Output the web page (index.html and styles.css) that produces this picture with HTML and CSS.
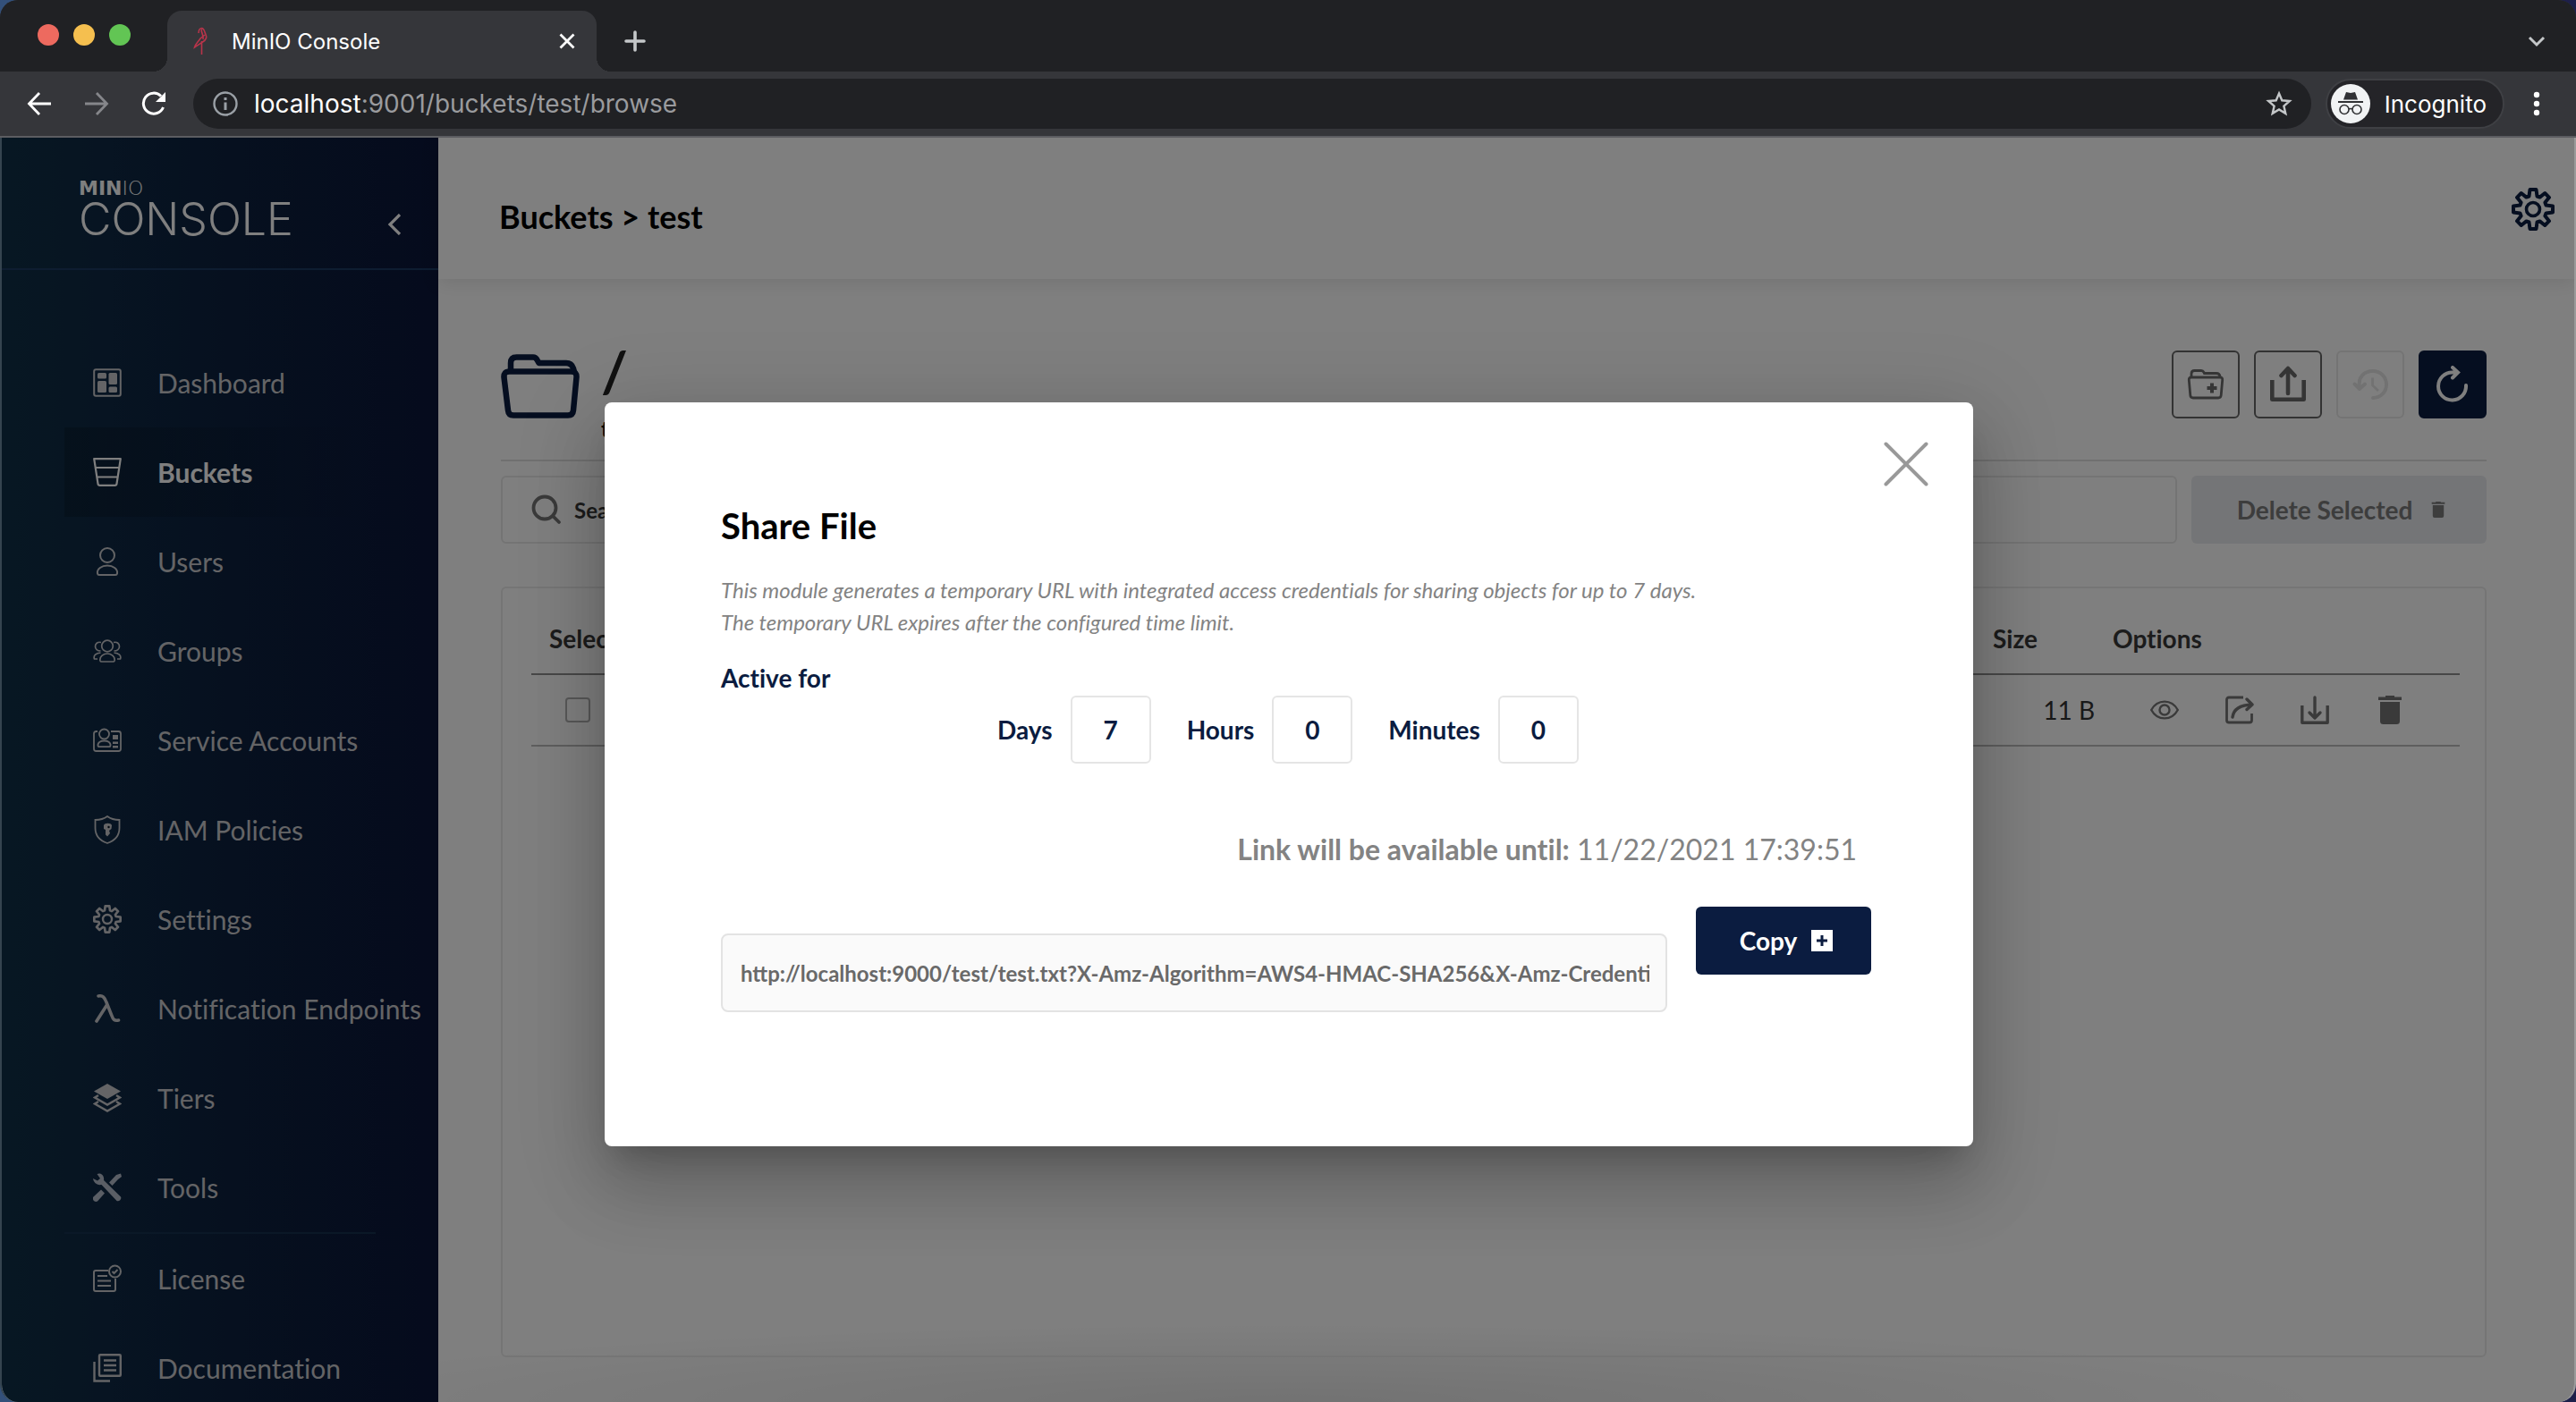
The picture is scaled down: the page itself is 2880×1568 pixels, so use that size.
FILE: index.html
```html
<!DOCTYPE html>
<html lang="en">
<head>
<meta charset="utf-8">
<title>MinIO Console</title>
<link rel="stylesheet" href="styles.css">
</head>
<body>
<svg class="sprite" aria-hidden="true">
  <symbol id="gear" viewBox="0 0 48 48">
    <path fill="none" stroke="currentColor" stroke-width="4" stroke-linejoin="round" d="M19.500 9.500 L20.500 2 H27.500 L28.500 9.500 L31.500 10.600 L37.200 6 L42 10.800 L37.400 16.500 L38.500 19.500 L46 20.500 V27.500 L38.500 28.500 L37.400 31.500 L42 37.200 L37.200 42 L31.500 37.400 L28.500 38.500 L27.500 46 H20.500 L19.500 38.500 L16.500 37.400 L10.800 42 L6 37.200 L10.600 31.500 L9.500 28.500 L2 27.500 V20.500 L9.500 19.500 L10.600 16.500 L6 10.800 L10.800 6 L16.500 10.600 Z"/>
    <circle cx="24" cy="24" r="7.500" fill="none" stroke="currentColor" stroke-width="3.600"/>
  </symbol>
  <symbol id="trash" viewBox="0 0 32 32">
    <path fill="currentColor" d="M11 0h10v1.500h8V5H3V1.500h8zM5 7h22v21.500a3.500 3.500 0 0 1-3.500 3.500h-15A3.500 3.500 0 0 1 5 28.500z"/>
  </symbol>
</svg>

<header class="browser">
  <div class="tabstrip">
    <div class="lights"><span class="light red"></span><span class="light amber"></span><span class="light green"></span></div>
    <div class="tab">
      <svg class="favicon" viewBox="0 0 32 32" fill="none" stroke="#b8344a" stroke-width="1.600"><path d="M13 7c0-4 2-5.500 3.500-5.500 3 0 3 4 4.500 7 2 4-1 7-3.500 8.500-4 2.500-6 4-9 6 1-4 4-6 6.500-10L20 9M16.500 2.500C15 6 19 8 18 14M16.500 16v15"/></svg>
      <span class="tab-title">MinIO Console</span>
      <button class="plain" aria-label="Close tab"><svg width="18" height="18" viewBox="0 0 18 18" stroke="#fff" stroke-width="2.800"><path d="M1.500 1.500l15 15M16.500 1.500l-15 15"/></svg></button>
    </div>
    <button class="plain new-tab" aria-label="New tab"><svg width="24" height="24" viewBox="0 0 24 24" stroke="#c4c7c9" stroke-width="3.600" stroke-linecap="round"><path d="M12 2v20M2 12h20"/></svg></button>
    <button class="plain tab-search" aria-label="Search tabs"><svg width="20" height="20" viewBox="0 0 20 20" fill="none" stroke="#c4c7c9" stroke-width="3"><path d="M2 6l8 8 8-8"/></svg></button>
  </div>
  <div class="toolbar">
    <button class="plain" aria-label="Back"><svg width="28" height="28" viewBox="0 0 28 28" fill="none" stroke="#fff" stroke-width="2.800"><path d="M27 14H3M14 2L2.500 14 14 26"/></svg></button>
    <button class="plain" aria-label="Forward"><svg width="28" height="28" viewBox="0 0 28 28" fill="none" stroke="#85868a" stroke-width="2.800"><path d="M1 14h24M14 2l11.500 12L14 26"/></svg></button>
    <button class="plain" aria-label="Reload"><svg width="28" height="28" viewBox="0 0 28 28"><path fill="none" stroke="#fff" stroke-width="3" d="M24.500 18A11.500 11.500 0 1 1 22 5.500"/><path fill="#fff" d="M27 1v11H16z"/></svg></button>
    <div class="address">
      <svg width="28" height="28" viewBox="0 0 28 28" fill="none" stroke="#9aa0a6" stroke-width="2.400"><circle cx="14" cy="14" r="12.500"/><path stroke-width="3" d="M14 12.500V21M14 7v3"/></svg>
      <span class="url"><b>localhost</b>:9001/buckets/test/browse</span>
      <button class="plain" aria-label="Bookmark"><svg width="30" height="30" viewBox="0 0 30 30" fill="none" stroke="#c4c7c9" stroke-width="2.400"><path d="M15 3.500l3.300 7.800 8.500.7-6.400 5.600 1.900 8.300L15 21.500l-7.300 4.400 1.900-8.300L3.200 12l8.500-.7z"/></svg></button>
    </div>
    <button class="incognito">
      <svg width="44" height="44" viewBox="0 0 44 44"><circle cx="22" cy="22" r="22" fill="#f1f3f4"/><path fill="#303134" d="M14 17.500l3-8.500 5 1 5-1 3 8.500zM8 19h28v2H8z"/><g fill="none" stroke="#303134" stroke-width="1.600"><circle cx="15" cy="28.500" r="5"/><circle cx="29" cy="28.500" r="5"/><path d="M20 28q2-1 4 0"/></g></svg>
      <span>Incognito</span>
    </button>
    <button class="plain menu-dots" aria-label="Menu"><svg width="8" height="28" viewBox="0 0 8 28" fill="#fff"><circle cx="4" cy="4" r="3.200"/><circle cx="4" cy="14" r="3.200"/><circle cx="4" cy="24" r="3.200"/></svg></button>
  </div>
</header>

<div class="app">
  <aside class="sidebar">
    <div class="brand">
      <div class="logo">
        <span class="logo-top"><b>MIN</b>IO</span>
        <span class="logo-main">CONSOLE</span>
      </div>
      <button class="plain" aria-label="Collapse menu"><svg width="16" height="24" viewBox="0 0 16 24" fill="none" stroke="#fff" stroke-width="3.200"><path d="M14 1L3 12l11 11"/></svg></button>
    </div>
    <nav class="menu">
      <a href="#"><svg viewBox="0 0 32 32"><rect x="1.200" y="1.200" width="29.600" height="29.600" rx="2" fill="none" stroke="currentColor" stroke-width="2"/><g fill="currentColor"><rect x="5" y="5" width="10" height="6.500" rx="1.500"/><rect x="17.500" y="5" width="9.500" height="13" rx="1.500"/><rect x="5" y="14" width="10" height="13" rx="1.500"/><rect x="17.500" y="20.500" width="9.500" height="6.500" rx="1.500"/></g></svg>Dashboard</a>
      <a href="#" class="active"><svg viewBox="0 0 32 32" fill="none" stroke="currentColor" stroke-width="2.200" stroke-linejoin="round"><path d="M1.200 1.200h29.600L26.500 29q-.3 1.800-2 1.800h-17q-1.700 0-2-1.800zM2.500 11h27M4.500 21.500h23"/></svg>Buckets</a>
      <a href="#"><svg viewBox="0 0 32 32" fill="none" stroke="currentColor" stroke-width="2"><circle cx="16" cy="9" r="8"/><path d="M5 29.500C4 24 10 20.500 16 20.500S28 24 27 29.500q-.3 1.500-2 1.500H7q-1.700 0-2-1.500z"/></svg>Users</a>
      <a href="#"><svg viewBox="0 0 32 32" fill="none" stroke="currentColor" stroke-width="1.700"><circle cx="16" cy="10.500" r="6.300"/><path d="M8 27c-1-5 4-8 8-8s9 3 8 8q-.3 1-1.500 1h-13Q8.300 28 8 27zM9 6.500C5 5.500 2.500 8 2.500 11s2.500 5 6 5M23 6.500c4-1 6.500 1.500 6.500 4.500s-2.500 5-6 5M5 25H1.500c-1.500-4 2-6.500 7-7M27 25h3.500c1.500-4-2-6.500-7-7"/></svg>Groups</a>
      <a href="#"><svg viewBox="0 0 32 32" fill="none" stroke="currentColor" stroke-width="1.800"><path d="M5 6H3.500Q1 6 1 8.500v17Q1 28 3.500 28h25q2.500 0 2.500-2.500v-17Q31 6 28.500 6H20"/><circle cx="12.500" cy="9" r="5.500"/><path d="M5.500 22c-.5-4 3.500-5.500 7-5.500s7.500 1.500 7 5.500q-.2 1.200-1.500 1.200H7Q5.700 23.200 5.500 22z"/><path fill="currentColor" stroke="none" d="M22 10h6v5h-6zM22 17.500h6V20h-6zM22 22h6v2.500h-6z"/></svg>Service Accounts</a>
      <a href="#"><svg viewBox="0 0 32 32" fill="none" stroke="currentColor" stroke-width="1.800"><path d="M16 1c4 3 9 4 13.500 4v9c0 9-6 14.500-13.500 17C8.500 28.500 2.500 23 2.500 14V5C7 5 12 4 16 1z"/><path fill="currentColor" stroke="none" d="M12 11c1-3 8-3 9 0l-.5 4-2.500 2 1 3-3 3.500-2-2V16l-2-1z"/><circle cx="17.500" cy="13" r="1.200" fill="#071220" stroke="none"/></svg>IAM Policies</a>
      <a href="#"><svg><use href="#gear"/></svg>Settings</a>
      <a href="#"><svg viewBox="0 0 32 32" fill="none" stroke="currentColor" stroke-width="3.600" stroke-linecap="round"><path d="M6 2c5-1 7 1.500 9 7l6 15c1.500 4.500 3 6 7.500 5M15.500 12L4 30"/></svg>Notification Endpoints</a>
      <a href="#"><svg viewBox="0 0 32 32"><path fill="currentColor" d="M16 0l15 8.500L16 17 1 8.500z"/><path fill="none" stroke="currentColor" stroke-width="2.400" d="M6 13l-4 2.500L16 23.500l14-8L26 13M6 20l-4 2.500L16 30.500l14-8L26 20"/></svg>Tiers</a>
      <a href="#"><svg class="tools" viewBox="0 0 32 32" fill="currentColor"><path d="M4.500 1C9-1 13 3 12 8l19 18.500c1.500 2.500-2 6-4.500 4.500L9.500 13C4 14 .5 10 0 6l5 2.500L8 6zM18 10.500L26 2l5-1.500L32 4l-4 3-6.500 7zM9 18.500l4 4-8 9c-3 1.500-6-1.500-5-4.500z"/></svg>Tools</a>
      <hr>
      <a href="#"><svg viewBox="0 0 32 32" fill="none" stroke="currentColor" stroke-width="2"><path d="M17 7H3Q1 7 1 9v19q0 2 2 2h20q2 0 2-2V16M5 13h11M5 18.500h15M5 24h15"/><circle cx="24.500" cy="8" r="6.500"/><path d="M21.500 8l2 2 4-4"/></svg>License</a>
      <a href="#"><svg viewBox="0 0 32 32" fill="none" stroke="currentColor" stroke-width="2.400"><rect x="7" y="1.200" width="23.800" height="23.500" rx="1"/><path d="M12 7.500h14M12 13h14M12 18.500h14M1.500 9v21.500H19"/></svg>Documentation</a>
    </nav>
  </aside>

  <main class="main">
    <header class="page-head">
      <h1>Buckets &gt; test</h1>
      <button class="plain" aria-label="Bucket settings"><svg width="48" height="48"><use href="#gear"/></svg></button>
    </header>
    <div class="content">
      <section class="path">
        <svg class="folder" viewBox="0 0 88 72" fill="none" stroke="currentColor" stroke-width="6.500" stroke-linejoin="round"><path d="M11 19V10q0-6.500 6.500-6.500H36q3 0 4.500 3l2 3.500H73q6 0 8 6l1 4"/><path d="M9.500 19.500h69q6.500 0 6 6.500l-3.500 37q-.5 5.500-6 5.500H14q-5.500 0-6-5.500L3.500 26q-.5-6.500 6-6.500z"/></svg>
        <div class="path-text"><h2>/</h2><p>test</p></div>
        <div class="actions">
          <button aria-label="New folder"><svg width="42" height="42" viewBox="0 0 42 42" fill="none" stroke="currentColor" stroke-width="2.800"><path d="M5 12V9q0-3.500 3.500-3.500H16q2 0 3 2l.5 1H33q3.500 0 4 3.500"/><path d="M5 13h32q3 0 2.700 3l-1.500 17q-.2 3-3.200 3H7q-3 0-3.200-3L2.300 16Q2 13 5 13z"/><path stroke-width="4" d="M28 19.500v11M22.500 25h11"/></svg></button>
          <button aria-label="Upload"><svg width="42" height="42" viewBox="0 0 42 42" fill="none" stroke="currentColor" stroke-width="4.600" stroke-linejoin="round"><path stroke-linecap="round" d="M21 31V4M13.500 11L21 3l7.500 8"/><path d="M3.300 16v21.700h35.400V16"/></svg></button>
          <button disabled aria-label="Version history"><svg width="42" height="42" viewBox="0 0 42 42" fill="none" stroke="currentColor" stroke-width="4"><path d="M9 24C7 13 14 6 24 6c8.500 0 15 6.500 15 15s-6.500 15-15 15" stroke-linecap="round"/><path stroke-linecap="round" stroke-linejoin="round" d="M3.500 20.500L9 26l6-5.500"/><path stroke-width="2.800" d="M23.500 13.500V22l6.500 6"/></svg></button>
          <button class="primary" aria-label="Refresh"><svg width="42" height="42" viewBox="0 0 42 42" fill="none" stroke="currentColor" stroke-width="4" stroke-linecap="round"><path d="M36 22A15.500 15.500 0 1 1 21 7.500h5M21 2l6 5.500-6 6"/></svg></button>
        </div>
      </section>
      <section class="filters">
        <label class="search"><svg width="34" height="34" viewBox="0 0 34 34" fill="none" stroke="currentColor" stroke-width="3.800"><circle cx="15" cy="15" r="12.500"/><path stroke-linecap="round" d="M24 24l7 7"/></svg><input type="text" placeholder="Search Objects" aria-label="Search Objects"></label>
        <button class="delete">Delete Selected <svg width="18" height="18"><use href="#trash"/></svg></button>
      </section>
      <section class="panel">
        <table>
          <thead><tr><th class="c-select">Select</th><th aria-label="Name"></th><th class="c-date" aria-label="Last modified"></th><th class="c-size">Size</th><th class="c-options">Options</th></tr></thead>
          <tbody><tr>
            <td class="c-select"><input type="checkbox" aria-label="Select test.txt"></td><td></td><td class="c-date"></td><td class="c-size">11 B</td>
            <td class="c-options"><div class="row-icons">
              <button class="plain" aria-label="Preview"><svg viewBox="0 0 32 32" fill="none" stroke="currentColor" stroke-width="2.400"><path d="M1.200 16C8 3.500 24 3.500 30.800 16 24 28.500 8 28.500 1.200 16z"/><circle cx="16" cy="16" r="5.500"/></svg></button>
              <button class="plain" aria-label="Share"><svg viewBox="0 0 32 32" fill="none" stroke="currentColor" stroke-width="2.800" stroke-linejoin="round"><path d="M20 2H4Q1.500 2 1.500 4.500v23Q1.500 30 4 30h23q2.500 0 2.500-2.500V20"/><path stroke-width="3.400" stroke-linecap="round" d="M8 24c1-8 7-13.500 22-14M24 4l6 6-6 5.500"/></svg></button>
              <button class="plain" aria-label="Download"><svg viewBox="0 0 32 32" fill="none" stroke="currentColor" stroke-width="3.400" stroke-linejoin="round"><path stroke-linecap="round" d="M16 2v22M10 19l6 6 6-6"/><path d="M1.800 11v19.200h28.400V11"/></svg></button>
              <button class="plain" aria-label="Delete"><svg><use href="#trash"/></svg></button>
            </div></td>
          </tr></tbody>
        </table>
      </section>
    </div>
  </main>

  <div class="overlay">
    <div class="dialog" role="dialog" aria-modal="true" aria-labelledby="dlg-title">
      <div class="dialog-close"><button class="plain" aria-label="Close"><svg width="50" height="50" viewBox="0 0 50 50" stroke="#999" stroke-width="4" stroke-linecap="round"><path d="M2.500 2.500l45 45M47.500 2.500l-45 45"/></svg></button></div>
      <h2 id="dlg-title">Share File</h2>
      <p class="desc">This module generates a temporary URL with integrated access credentials for sharing objects for up to 7 days.<br>The temporary URL expires after the configured time limit.</p>
      <h3>Active for</h3>
      <div class="duration">
        <label>Days <input type="text" value="7"></label>
        <label>Hours <input type="text" value="0"></label>
        <label>Minutes <input type="text" value="0"></label>
      </div>
      <p class="until"><b>Link will be available until:</b> 11/22/2021 17:39:51</p>
      <div class="share">
        <input type="text" readonly aria-label="Share link" value="http://localhost:9000/test/test.txt?X-Amz-Algorithm=AWS4-HMAC-SHA256&amp;X-Amz-Credential=minio">
        <button class="copy">Copy <svg width="24" height="24" viewBox="0 0 24 24"><path fill="#fff" d="M0 0h24v24H0z"/><path stroke="#0b1c40" stroke-width="3" d="M12 6v12M6 12h12"/></svg></button>
      </div>
    </div>
  </div>
</div>
</body>
</html>
```
FILE: styles.css
```css
* { box-sizing: border-box; }
html { background: linear-gradient(90deg, #33507a, #1d1f4a); }
body {
  margin: 0;
  height: 100vh;
  display: flex;
  flex-direction: column;
  font-family: Lato, "Liberation Sans", sans-serif;
  font-variant-ligatures: none;
}
h1, h2, h3, p { margin: 0; }
button, input { font: inherit; color: inherit; }
button { cursor: pointer; }
svg { display: block; flex: none; }
.sprite { position: absolute; width: 0; height: 0; }
.plain { padding: 0; border: 0; background: none; flex: none; }

/* Browser chrome */
.browser {
  flex: none;
  overflow: hidden;
  font-family: Inter, Roboto, sans-serif;
  color: #fff;
  background: #35363a;
  border-bottom: 2px solid #5c5d61;
  border-radius: 20px 20px 0 0;
}
.tabstrip {
  display: flex;
  align-items: stretch;
  height: 80px;
  padding: 12px 34px 0 42px;
  background: #202124;
}
.lights { display: flex; gap: 16px; width: 145px; padding-top: 15px; }
.light { width: 24px; height: 24px; border-radius: 50%; }
.red { background: #ed6a5f; }
.amber { background: #f5bf4f; }
.green { background: #62c554; }
.tab {
  position: relative;
  display: flex;
  align-items: center;
  width: 480px;
  padding: 0 24px 0 22px;
  border-radius: 16px 16px 0 0;
  background: #35363a;
  font-size: 24px;
}
.tab::before, .tab::after {
  content: "";
  position: absolute;
  bottom: 0;
  width: 16px;
  height: 16px;
}
.tab::before { right: 100%; background: radial-gradient(circle at 0 0, transparent 16px, #35363a 16px); }
.tab::after { left: 100%; background: radial-gradient(circle at 100% 0, transparent 16px, #35363a 16px); }
.favicon { width: 32px; height: 32px; margin-right: 18px; }
.tab-title { flex: 1; }
.new-tab { margin-left: 31px; }
.tab-search { margin-left: auto; }
.toolbar {
  display: flex;
  align-items: center;
  height: 72px;
  padding: 0 40px 0 30px;
  gap: 36px;
}
.address {
  flex: 1;
  display: flex;
  align-items: center;
  height: 56px;
  margin: 0 -20px 0 -6px;
  padding: 0 21px 0 22px;
  border-radius: 28px;
  background: #202124;
  font-size: 28px;
}
.url { flex: 1; margin-left: 18px; color: #9a9b9e; }
.url b { font-weight: 400; color: #fff; }
.incognito {
  display: flex;
  align-items: center;
  gap: 16px;
  height: 56px;
  padding: 0 18px 0 4px;
  border: 2px solid #3f4044;
  border-radius: 28px;
  background: #242428;
  font-size: 26px;
}
.menu-dots { margin-left: -4px; }

/* Application */
.app {
  position: relative;
  flex: 1;
  min-height: 0;
  display: grid;
  grid-template-columns: 488px 1fr;
  grid-template-rows: minmax(0, 1fr);
  overflow: hidden;
  border: solid;
  border-width: 0 2px;
  border-color: #9a9a9a #9a9a9a #9a9a9a #35444f;
  border-radius: 0 0 20px 20px;
  background: #fff;
}
.sidebar {
  overflow: hidden;
  color: #fff;
  background: linear-gradient(90deg, #0e2f46 0%, #0e2844 25%, #0c203e 55%, #0b163a 100%);
}
.brand {
  display: flex;
  justify-content: space-between;
  align-items: flex-end;
  height: 148px;
  padding: 0 41px 31px 86px;
  border-bottom: 2px solid #1c3a63;
}
.brand .plain { margin-bottom: 6px; }
.logo { display: flex; flex-direction: column; font-family: Inter, sans-serif; font-weight: 300; }
.logo-top { font-family: "DejaVu Sans", sans-serif; font-size: 22px; line-height: 20px; }
.logo-top b { font-weight: 700; }
.logo-main { font-size: 50px; line-height: 48px; }
.menu { padding-top: 76px; font-size: 30px; }
.menu a {
  display: flex;
  align-items: center;
  gap: 40px;
  height: 100px;
  margin-left: 70px;
  padding-left: 32px;
  color: #c8c9cc;
  text-decoration: none;
  white-space: nowrap;
}
.menu svg { width: 32px; height: 32px; }
.menu .active {
  color: #fff;
  font-weight: 700;
  background: linear-gradient(90deg, rgba(0, 0, 0, .2), transparent 80%);
}
.menu .tools { color: #b4bccb; }
.menu hr { height: 2px; margin: 0 70px; border: 0; background: #15304f; }
.main { display: flex; flex-direction: column; min-width: 0; color: #000; }
.page-head {
  display: flex;
  justify-content: space-between;
  align-items: center;
  height: 158px;
  padding: 2px 22px 0 68px;
  box-shadow: 0 4px 20px rgba(0, 0, 0, .1);
}
.page-head h1 { padding-top: 16px; font-size: 36px; }
.page-head button { color: #0b1c40; }
.content {
  flex: 1;
  display: flex;
  flex-direction: column;
  padding: 80px 98px 50px 70px;
  background: radial-gradient(1200px 90px at 40% 100%, rgba(0, 0, 0, .1), transparent);
}
.path { display: flex; height: 124px; border-bottom: 2px solid #e0e0e0; }
.folder { width: 88px; height: 72px; margin-top: 4px; color: #0b1c40; }
.path-text { flex: 1; padding-left: 24px; }
.path-text h2 { font-size: 64px; line-height: 46px; color: #222; }
.path-text p { margin-top: 24px; font-size: 24px; font-weight: 700; line-height: 36px; }
.actions { display: flex; gap: 16px; }
.actions button {
  display: grid;
  place-items: center;
  width: 76px;
  height: 76px;
  padding: 0;
  border: 2px solid #666;
  border-radius: 6px;
  background: none;
  color: #6a6a6a;
}
.actions button:disabled { border-color: #e8e8e8; color: #e4e4e4; }
.actions .primary { border-color: #0b1c40; background: #0b1c40; color: #fff; }
.filters { display: flex; gap: 16px; height: 76px; margin-top: 16px; }
.search {
  flex: 1;
  display: flex;
  align-items: center;
  gap: 12px;
  padding-left: 32px;
  border: 2px solid #e8e8e8;
  border-radius: 6px;
  color: #757575;
}
.search input { flex: 1; border: 0; outline: 0; background: none; font-size: 24px; font-weight: 700; }
.search input::placeholder { color: #393939; opacity: 1; }
.delete {
  display: flex;
  align-items: center;
  justify-content: center;
  gap: 20px;
  width: 330px;
  padding: 0 0 0 6px;
  border: 0;
  border-radius: 6px;
  background: #e8eaee;
  color: #7a7a7a;
  font-size: 28px;
  font-weight: 700;
}
.panel {
  flex: 1;
  margin-top: 48px;
  padding: 16px 28px 0 32px;
  border: 2px solid #eaeaea;
  border-radius: 6px;
}
table { width: 100%; border-collapse: collapse; table-layout: fixed; font-size: 28px; color: #393939; }
th, td { height: 80px; padding: 0; text-align: left; border-bottom: 2px solid #bdbdbd; }
th { border-color: #8e8e8e; }
.c-select { width: 280px; padding-left: 20px; }
td.c-select { padding-left: 38px; }
.c-date { width: 560px; }
.c-size { width: 134px; }
td.c-size { padding-right: 20px; text-align: right; color: #333; }
.c-options { width: 388px; }
td.c-options { padding-left: 42px; }
.c-select input {
  appearance: none;
  display: block;
  width: 28px;
  height: 28px;
  margin: 0;
  border: 2px solid #b0b0b0;
  border-radius: 4px;
}
.row-icons { display: flex; gap: 52px; color: #757575; }
.row-icons svg { width: 32px; height: 32px; }

/* Share dialog */
.overlay {
  position: absolute;
  inset: 0;
  display: flex;
  justify-content: center;
  align-items: flex-start;
  padding: 296px 0 0 2px;
  background: rgba(0, 0, 0, .5);
}
.dialog {
  width: 1530px;
  min-height: 832px;
  padding: 44px 50px 60px 130px;
  border-radius: 8px;
  background: #fff;
  color: #0b1c40;
  box-shadow: 0 22px 30px -14px rgba(0, 0, 0, .2), 0 48px 76px 6px rgba(0, 0, 0, .14), 0 18px 92px 16px rgba(0, 0, 0, .12);
}
.dialog-close { display: flex; justify-content: flex-end; }
.dialog h2 { margin-top: 18px; font-size: 40px; line-height: 52px; color: #000; }
.desc { margin-top: 28px; font-size: 24px; line-height: 36px; font-style: italic; color: #838383; }
.dialog h3 { margin-top: 26px; font-size: 28px; line-height: 36px; }
.duration { display: flex; justify-content: center; gap: 40px; margin-top: 2px; padding-right: 82px; font-size: 28px; font-weight: 700; }
.duration label { display: flex; align-items: center; gap: 20px; }
.duration input {
  width: 90px;
  height: 76px;
  padding: 0;
  border: 2px solid #e5e5e5;
  border-radius: 6px;
  text-align: center;
}
.until { margin: 76px 80px 0 0; font-size: 32px; line-height: 40px; text-align: right; color: #838383; }
.share { display: flex; gap: 32px; margin: 44px 64px 0 0; }
.share input {
  flex: 1;
  min-width: 0;
  height: 88px;
  margin-top: 30px;
  padding: 0 18px 0 20px;
  border: 2px solid #e3e3e3;
  border-radius: 8px;
  background: #fafafa;
  font-size: 24px;
  font-weight: 700;
  font-variant-ligatures: normal;
  color: #696969;
}
.copy {
  display: flex;
  align-items: center;
  justify-content: center;
  gap: 16px;
  width: 196px;
  height: 76px;
  padding: 0 0 0 6px;
  border: 0;
  border-radius: 6px;
  background: #0b1c40;
  color: #fff;
  font-size: 28px;
  font-weight: 700;
}
```
